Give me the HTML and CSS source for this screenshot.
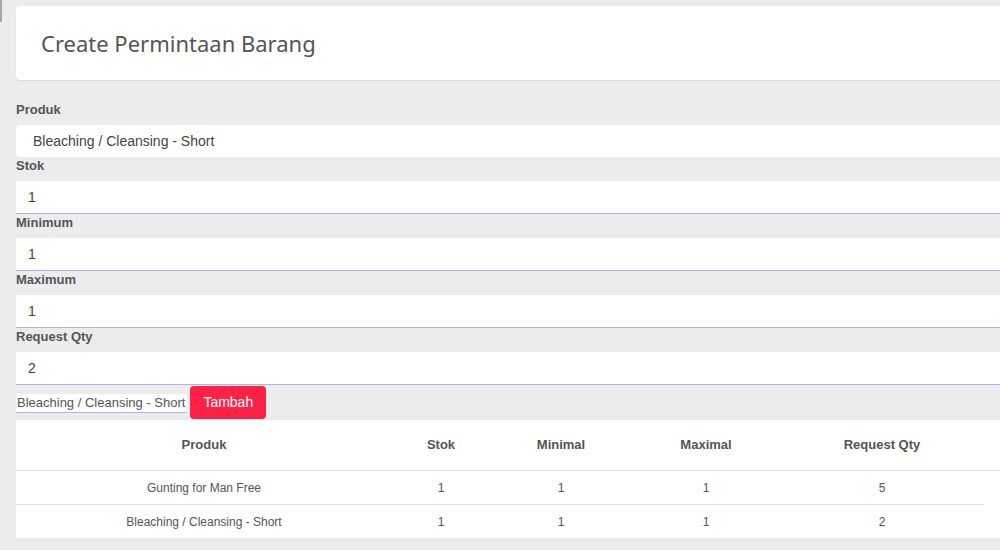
FILE: index.html
```html
<!DOCTYPE html>
<html lang="id">
<head>
<meta charset="utf-8">
<title>Create Permintaan Barang</title>
<link rel="stylesheet" href="styles.css">
</head>
<body>
<div class="edge"></div>
<div class="page">
  <div class="content">
    <div class="card">
      <h1 class="title">Create Permintaan Barang</h1>
    </div>

    <form class="form">
      <div class="group">
        <label class="label">Produk</label>
        <div class="select">Bleaching / Cleansing - Short</div>
      </div>
      <div class="group">
        <label class="label">Stok</label>
        <div class="input">1</div>
      </div>
      <div class="group">
        <label class="label">Minimum</label>
        <div class="input">1</div>
      </div>
      <div class="group">
        <label class="label">Maximum</label>
        <div class="input">1</div>
      </div>
      <div class="group">
        <label class="label">Request Qty</label>
        <div class="input">2</div>
      </div>
      <div class="actions">
        <span class="chosen">Bleaching / Cleansing - Short</span>
        <button type="button" class="btn">Tambah</button>
      </div>
    </form>

    <div class="table-wrap">
      <table class="table">
        <colgroup>
          <col class="c-prod"><col class="c-stok"><col class="c-min"><col class="c-max"><col class="c-req"><col class="c-pad">
        </colgroup>
        <thead>
          <tr><th>Produk</th><th>Stok</th><th>Minimal</th><th>Maximal</th><th>Request Qty</th><th class="pad"></th></tr>
        </thead>
        <tbody>
          <tr class="sep"><td>Gunting for Man Free</td><td>1</td><td>1</td><td>1</td><td>5</td><td class="pad"></td></tr>
          <tr><td>Bleaching / Cleansing - Short</td><td>1</td><td>1</td><td>1</td><td>2</td><td class="pad"></td></tr>
        </tbody>
      </table>
    </div>
  </div>
</div>
</body>
</html>
```
FILE: styles.css
```css
html, body {
  margin: 0;
  padding: 0;
  background: #ececec;
  overflow: hidden;
}

body {
  font-family: "Liberation Sans", Arial, sans-serif;
  color: #555;
  position: relative;
}

.edge {
  position: absolute;
  left: 0;
  top: 0;
  width: 2px;
  height: 22px;
  background: #a8a8a8;
}

.page {
  padding: 6px 0 0 16px;
  overflow: hidden;
}

.content {
  width: 1000px;
}

.card {
  background: #fff;
  border-radius: 4px;
  height: 74px;
  box-shadow: 0 1px 1px rgba(0, 0, 0, 0.08);
  display: flex;
  align-items: center;
  padding-left: 25px;
  box-sizing: border-box;
}

.title {
  margin: 0;
  font-family: "Noto Sans", "Open Sans", sans-serif;
  font-weight: 400;
  font-size: 22px;
  color: #555;
}

.form {
  margin: 21px 0 0;
}

.label {
  display: block;
  font-size: 13px;
  font-weight: 700;
  line-height: 17px;
  margin-bottom: 7px;
  color: #555;
}

.select {
  background: #fff;
  height: 32px;
  line-height: 32px;
  border-radius: 4px;
  padding-left: 17px;
  font-size: 14px;
  color: #444;
}

.input {
  background: #fff;
  height: 32px;
  line-height: 32px;
  border-bottom: 1px solid #aab4f4;
  padding-left: 12px;
  font-size: 14px;
  color: #444;
}

.actions {
  display: flex;
  align-items: baseline;
  gap: 3px;
  margin-top: 1px;
  margin-bottom: 1px;
}

.chosen {
  background: #fff;
  font-size: 13px;
  line-height: 18px;
  color: #555;
  border-bottom: 1px solid #aab4f4;
  padding: 0 2px 0 1px;
}

.btn {
  font-family: "Liberation Sans", Arial, sans-serif;
  font-size: 14px;
  line-height: 17px;
  padding: 8px 13px;
  border: 0;
  border-radius: 4px;
  background: #fc2245;
  color: #fff;
}

.table-wrap {
  background: #fff;
}

.table {
  border-collapse: collapse;
  width: 1000px;
  table-layout: fixed;
}

.c-prod { width: 376px; }
.c-stok { width: 98px; }
.c-min { width: 142px; }
.c-max { width: 148px; }
.c-req { width: 204px; }
.c-pad { width: 32px; }

.table th {
  height: 49px;
  padding: 0 0 1px;
  font-size: 13px;
  font-weight: 700;
  color: #555;
  text-align: center;
  border-bottom: 1px solid #e2e2e2;
}

.table td {
  height: 33px;
  padding: 0;
  font-size: 12px;
  color: #555;
  text-align: center;
}

.table tr.sep td {
  border-bottom: 1px solid #e2e2e2;
}

.table tr.sep td.pad {
  border-bottom: 0;
}
```
